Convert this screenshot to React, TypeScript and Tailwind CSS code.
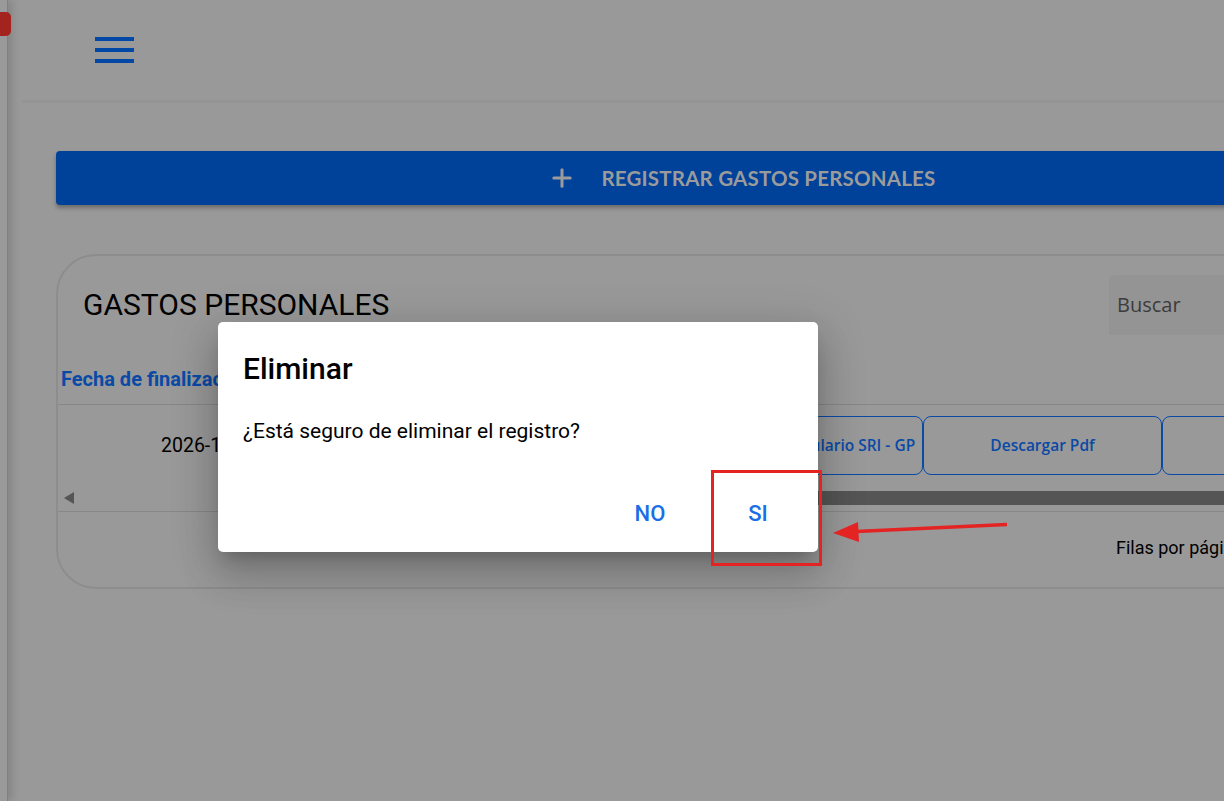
import { Plus } from "lucide-react";

export default function App() {
    return (
        <div className="relative h-[801px] w-[1224px] overflow-hidden bg-[#999999] font-['Roboto',sans-serif]">
            <div className="flex h-full">
                {/* Left drawer edge */}
                <aside className="relative z-10 w-[8px] shrink-0 border-r border-[#808080] bg-[#9a9a9a] shadow-[3px_0_10px_rgba(0,0,0,0.18)]">
                    <div className="absolute left-[-6px] top-[12px] h-[24px] w-[17px] rounded-[5px] bg-[#a3231f]" />
                </aside>

                <main className="min-w-0 flex-1">
                    {/* Header */}
                    <header className="ml-[14px] flex h-[103px] items-center border-b-[3px] border-[#949494] pl-[73px]">
                        <div className="flex flex-col gap-[7px]">
                            <span className="block h-[4px] w-[39px] bg-[#0047a6]" />
                            <span className="block h-[4px] w-[39px] bg-[#0047a6]" />
                            <span className="block h-[4px] w-[39px] bg-[#0047a6]" />
                        </div>
                    </header>

                    <div className="pl-[48px] pt-[48px]">
                        {/* Register button */}
                        <button className="flex h-[54px] w-[1380px] items-center justify-center gap-[25px] rounded-[4px] bg-[#00419a] pr-[8px] font-['Lato',sans-serif] text-[20.5px] font-bold tracking-[0.2px] text-[#9b9b9b] shadow-[0_3px_4px_rgba(0,0,0,0.3)]">
                            <Plus size={28} strokeWidth={2.6} />
                            <span>REGISTRAR GASTOS PERSONALES</span>
                        </button>

                        {/* Card */}
                        <section className="mt-[49px] w-[1400px] rounded-[40px] border-2 border-[#8d8d8d] pb-[4px]">
                            <div className="flex items-start justify-between pl-[25px] pt-[19px]">
                                <h1 className="mt-[7px] text-[30px] text-black">GASTOS PERSONALES</h1>
                                <div className="mr-[85px] flex h-[60px] w-[260px] items-center rounded-t-[6px] bg-[#949494] pl-[8px] font-['Open_Sans',sans-serif] text-[20px] text-[#3c3c3c]">
                                    Buscar
                                </div>
                            </div>

                            {/* Table header */}
                            <div className="mt-[29px] border-b border-[#878787] pb-[10px] pl-[3px] text-[20px] font-bold text-[#0a4aa6]">
                                Fecha de finalización
                            </div>

                            {/* Row */}
                            <div className="flex items-center pb-[16px] pt-[11px]">
                                <div className="w-[626px] pl-[103px] text-[19.5px] text-black">2026-12-31</div>
                                <div className="flex font-['Open_Sans',sans-serif] text-[15.5px] font-semibold text-[#0a4aa6]">
                                    <div className="flex h-[59px] w-[239px] items-center justify-center whitespace-nowrap rounded-[8px] border border-[#0a4aa6]">
                                        Descargar Formulario SRI - GP
                                    </div>
                                    <div className="flex h-[59px] w-[239px] items-center justify-center rounded-[8px] border border-[#0a4aa6]">
                                        Descargar Pdf
                                    </div>
                                    <div className="flex h-[59px] w-[239px] items-center justify-center rounded-[8px] border border-[#0a4aa6]">
                                        Editar
                                    </div>
                                </div>
                            </div>

                            {/* Horizontal scrollbar */}
                            <div className="flex h-[14px] items-center">
                                <div className="ml-[6px] h-0 w-0 border-y-[6px] border-r-[10px] border-y-transparent border-r-[#555555]" />
                                <div className="ml-[230px] h-[14px] flex-1 bg-[#555555]" />
                            </div>

                            {/* Footer */}
                            <div className="mt-[6px] flex h-[72px] items-center border-t border-[#878787] pl-[1058px] text-[18px] text-black">
                                Filas por página: 10
                            </div>
                        </section>
                    </div>
                </main>
            </div>

            {/* Confirm dialog */}
            <div className="absolute left-[218px] top-[322px] flex h-[230px] w-[600px] flex-col rounded-[5px] bg-white shadow-[0_11px_15px_-7px_rgba(0,0,0,0.2),0_24px_38px_3px_rgba(0,0,0,0.14),0_9px_46px_8px_rgba(0,0,0,0.12)]">
                <h2 className="px-[25px] pt-[30px] text-[30px] font-medium leading-[34px] text-black">Eliminar</h2>
                <p className="px-[25px] pt-[30px] text-[21px] text-black">¿Está seguro de eliminar el registro?</p>
                <div className="mt-auto flex justify-end gap-[28px] pb-[22px] pr-[20px] text-[22px] font-medium text-[#1a6fe6]">
                    <button className="w-[80px] text-center">NO</button>
                    <button className="w-[80px] text-center">SI</button>
                </div>
            </div>

            {/* Annotation: red box and arrow */}
            <div className="absolute left-[711px] top-[470px] h-[96px] w-[111px] border-[3px] border-[#e42323]" />
            <svg className="absolute left-[830px] top-[515px]" width="185" height="30" viewBox="0 0 185 30">
                <line x1="26" y1="16.5" x2="177" y2="9.5" stroke="#e42323" strokeWidth="3.5" />
                <polygon points="3,18 28,7 29,27" fill="#e42323" />
            </svg>
        </div>
    );
}
